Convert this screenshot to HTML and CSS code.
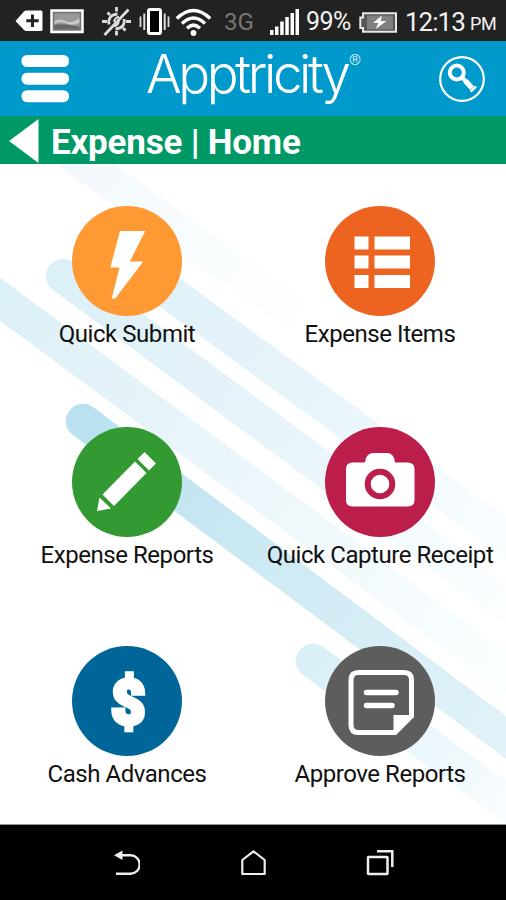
FILE: index.html
```html
<!DOCTYPE html>
<html lang="en">
<head>
    <meta charset="UTF-8">
    <meta name="viewport" content="width=device-width, initial-scale=1.0">
    <title>Expense | Home</title>
    <link rel="stylesheet" href="styles.css">
</head>
<body>
    <div class="status-bar">
        <svg class="status-icons" width="258" height="40" viewBox="0 0 258 40">
            <!-- battery saver tag -->
            <path d="M15.5 20 L24 10.5 Q25 9.5 26.500 9.500 H41 Q42.500 9.500 42.500 11 V28.500 Q42.500 30 41 30 H26.500 Q25 30 24 29 Z" fill="#fff"/>
            <path d="M32.500 13.500 V26 M26.300 19.700 H38.700" stroke="#222" stroke-width="3"/>
            <!-- picture -->
            <rect x="51.500" y="9.500" width="31" height="21.500" fill="#777" stroke="#fff" stroke-width="2.500"/>
            <rect x="54.500" y="12.500" width="25" height="15.500" fill="#999"/>
            <path d="M54.500 20 Q60 17 66 20 T79.500 17 V22 Q72 25 66 22.500 T54.500 23 Z" fill="#c8c8c8"/>
            <path d="M54.500 24 Q64 22 79.500 26 V28 H54.500 Z" fill="#666"/>
            <!-- gps off -->
            <g stroke="#ddd" fill="none" stroke-width="2.800">
                <path d="M116.500 6 V10.500 M116.500 30 V34.500 M102 20.500 H107 M126 20.500 H131 M107.500 11.500 L110 14 M123 27 L125.500 29.500"/>
                <path d="M109 23.500 Q107.500 14 117.500 13 M124 18 Q125.500 27 115.500 28"/>
                <path d="M114 21 Q115 16 119 16 M119 20 Q118 25 114 25" stroke-width="2"/>
                <path d="M104.500 34 L128.500 8.500"/>
            </g>
            <!-- vibrate -->
            <rect x="148.500" y="8.500" width="12" height="24" rx="1.500" fill="#000" stroke="#fff" stroke-width="3"/>
            <path d="M144.300 12.500 V29 M164.700 12.500 V29" stroke="#ddd" stroke-width="2"/>
            <path d="M140.500 15.500 V26 M168.500 15.500 V26" stroke="#ddd" stroke-width="1.800"/>
            <!-- wifi -->
            <g stroke="#fff" fill="none" stroke-width="3.400">
                <path d="M176.800 17.500 Q193.500 1.500 210.200 17.500"/>
                <path d="M182 22.500 Q193.500 11.500 205 22.500"/>
                <path d="M187 27.300 Q193.500 21 200 27.300"/>
            </g>
            <circle cx="193.500" cy="32" r="2.900" fill="#fff"/>
            <text x="224" y="29" class="network" textLength="30" lengthAdjust="spacingAndGlyphs">3G</text>
        </svg>
        <svg class="signal" width="32" height="40" viewBox="0 0 32 40" fill="#fff">
            <rect x="1" y="29" width="3.500" height="5"/>
            <rect x="6" y="25.500" width="3.500" height="8.500"/>
            <rect x="11.200" y="20.500" width="3.500" height="13.500"/>
            <rect x="16.300" y="16" width="3.500" height="18"/>
            <rect x="21.500" y="12" width="3.500" height="22"/>
            <rect x="26.500" y="8" width="3.500" height="26"/>
        </svg>
        <span class="percent">99%</span>
        <svg class="battery" width="40" height="40" viewBox="0 0 40 40">
            <path d="M5 12.200 H38 V30.800 H5 V27 H2.300 V16.500 H5 Z" fill="#555" stroke="#e8e8e8" stroke-width="2"/>
            <rect x="9" y="14.500" width="26" height="14" fill="#808080"/>
            <path d="M24 14.500 L15 22 H20.500 L17.500 28 L28.500 20 H22.500 Z" fill="#fff"/>
        </svg>
        <span class="clock">12:13</span>
        <span class="meridiem">PM</span>
    </div>

    <div class="header">
        <svg class="menu" width="48" height="48" viewBox="0 0 48 48" fill="#fff">
            <rect x="0.500" y="0" width="47.500" height="12" rx="5.500"/>
            <rect x="0.500" y="17.700" width="47.500" height="12" rx="5.500"/>
            <rect x="0.500" y="35.200" width="47.500" height="12" rx="5.500"/>
        </svg>
        <div class="brand">
            <span class="brand-name">Apptricity</span>
            <span class="brand-mark">®</span>
        </div>
        <svg class="search" width="48" height="48" viewBox="0 0 48 48">
            <circle cx="24" cy="24" r="21.800" fill="none" stroke="#fff" stroke-width="2.200"/>
            <circle cx="18.800" cy="17.500" r="7" fill="none" stroke="#fff" stroke-width="4"/>
            <path d="M24 22.500 L28.500 27" stroke="#fff" stroke-width="4"/>
            <path d="M27.500 26 L34 33" stroke="#fff" stroke-width="5.500"/>
            <path d="M32.500 36.500 L38 31.500" stroke="#fff" stroke-width="2.500"/>
        </svg>
    </div>

    <div class="title-bar">
        <svg width="30" height="48" viewBox="0 0 30 48"><path d="M0 25 L29.500 3 V47 Z" fill="#fff"/></svg>
        <h1>Expense | Home</h1>
    </div>

    <div class="content">
        <svg class="stripes" width="506" height="661" viewBox="0 164 506 661" fill="none" stroke-width="34.500" stroke-linecap="round">
            <defs>
                <linearGradient id="pale" gradientUnits="userSpaceOnUse" x1="80" y1="150" x2="320" y2="330">
                    <stop offset="0" stop-color="#f2f9fc"/>
                    <stop offset="1" stop-color="#ffffff"/>
                </linearGradient>
                <linearGradient id="soft" gradientUnits="userSpaceOnUse" x1="60" y1="275" x2="540" y2="620">
                    <stop offset="0" stop-color="#dcf0f7"/>
                    <stop offset="0.500" stop-color="#e8f5fa"/>
                    <stop offset="0.800" stop-color="#f7fcfe"/>
                    <stop offset="1" stop-color="#fdfeff"/>
                </linearGradient>
                <linearGradient id="lower" gradientUnits="userSpaceOnUse" x1="0" y1="299" x2="506" y2="670">
                    <stop offset="0" stop-color="#dcf0f7"/>
                    <stop offset="0.450" stop-color="#ebf6fa"/>
                    <stop offset="1" stop-color="#fbfeff"/>
                </linearGradient>
                <linearGradient id="deep" gradientUnits="userSpaceOnUse" x1="83" y1="422" x2="506" y2="736">
                    <stop offset="0" stop-color="#b9e1ef"/>
                    <stop offset="0.500" stop-color="#d0ebf4"/>
                    <stop offset="1" stop-color="#e2f2f9"/>
                </linearGradient>
                <linearGradient id="last" gradientUnits="userSpaceOnUse" x1="313" y1="661" x2="506" y2="803">
                    <stop offset="0" stop-color="#daeff7"/>
                    <stop offset="1" stop-color="#f8fcfe"/>
                </linearGradient>
            </defs>
            <path d="M75 157 L320 332" stroke="url(#pale)"/>
            <path d="M150 278 L540 563" stroke="url(#soft)"/>
            <path d="M63 276 L540 629" stroke="url(#soft)"/>
            <path d="M-30 277 L540 699" stroke="url(#lower)"/>
            <path d="M83 421 L540 763" stroke="url(#deep)"/>
            <path d="M313 661 L540 827" stroke="url(#last)"/>
        </svg>

        <div class="tiles">
            <div class="tile">
                <svg width="110" height="110" viewBox="0 0 110 110">
                    <circle cx="55" cy="55" r="55" fill="#ff9933"/>
                    <path d="M48 25 H73.300 L57.800 55.500 H71.300 L43.200 92.500 H39.700 L47.500 61.500 H38.300 Z" fill="#fff"/>
                </svg>
                <span>Quick Submit</span>
            </div>
            <div class="tile">
                <svg width="110" height="110" viewBox="0 0 110 110">
                    <circle cx="55" cy="55" r="55" fill="#ec6420"/>
                    <g fill="#fff">
                        <rect x="29.500" y="30.500" width="14" height="13"/>
                        <rect x="49.500" y="30.500" width="35.500" height="13"/>
                        <rect x="29.500" y="49.500" width="14" height="13"/>
                        <rect x="49.500" y="49.500" width="35.500" height="13"/>
                        <rect x="29.500" y="69" width="14" height="13"/>
                        <rect x="49.500" y="69" width="35.500" height="13"/>
                    </g>
                </svg>
                <span>Expense Items</span>
            </div>
            <div class="tile">
                <svg width="110" height="110" viewBox="0 0 110 110">
                    <circle cx="55" cy="55" r="55" fill="#339933"/>
                    <g fill="#fff">
                        <path d="M72.500 25 L84 36.500 L77 43.500 L65.500 32 Z"/>
                        <path d="M63 34.500 L74.500 46 L42 79 L30.500 67.500 Z"/>
                        <path d="M27.500 70.500 L39 81.500 L25 84 Z"/>
                    </g>
                </svg>
                <span>Expense Reports</span>
            </div>
            <div class="tile">
                <svg width="110" height="110" viewBox="0 0 110 110">
                    <circle cx="55" cy="55" r="55" fill="#bb1e4b"/>
                    <path d="M27.500 35.500 H40 Q40.500 26 49 26 H61.500 Q69.500 26 70 35.500 H82.500 Q89.500 35.500 89.500 42 V73 Q89.500 79.500 82.500 79.500 H27.500 Q21 79.500 21 73 V42 Q21 35.500 27.500 35.500 Z" fill="#fff"/>
                    <circle cx="55" cy="57" r="12.300" fill="#fff" stroke="#bb1e4b" stroke-width="6"/>
                </svg>
                <span>Quick Capture Receipt</span>
            </div>
            <div class="tile">
                <svg width="110" height="110" viewBox="0 0 110 110">
                    <circle cx="55" cy="55" r="55" fill="#006699"/>
                    <text class="dollar" x="39" y="78" textLength="34" lengthAdjust="spacingAndGlyphs">$</text>
                </svg>
                <span>Cash Advances</span>
            </div>
            <div class="tile">
                <svg width="110" height="110" viewBox="0 0 110 110">
                    <circle cx="55" cy="55" r="55" fill="#5d5d5d"/>
                    <path d="M33.500 26.500 H79 Q86.500 26.500 86.500 34 V70 L70 86.500 H33.500 Q26 86.500 26 79 V34 Q26 26.500 33.500 26.500 Z" fill="none" stroke="#fff" stroke-width="5"/>
                    <path d="M68.500 88 V69 H88 Z" fill="#fff"/>
                    <path d="M41.500 46.500 H71 M41.500 59.500 H67" stroke="#fff" stroke-width="5.500" stroke-linecap="round"/>
                </svg>
                <span>Approve Reports</span>
            </div>
        </div>
    </div>

    <div class="nav-bar">
        <svg width="28" height="28" viewBox="0 0 28 28">
            <path d="M8 7.300 H18.500 A9.200 9.200 0 0 1 18.500 25.700 H4" fill="none" stroke="#eee" stroke-width="2.400"/>
            <path d="M2 7.300 L10.500 2.500 V12 Z" fill="#eee"/>
        </svg>
        <svg width="28" height="28" viewBox="0 0 28 28">
            <path d="M14.500 3.300 L25.700 12 V26 H3.300 V12 Z" fill="none" stroke="#eee" stroke-width="2.200" stroke-linejoin="round"/>
        </svg>
        <svg width="28" height="28" viewBox="0 0 28 28" fill="none" stroke="#eee" stroke-width="2.500">
            <rect x="2" y="9" width="19.500" height="17" rx="0.500"/>
            <path d="M11 3.300 H26.300 V19"/>
        </svg>
    </div>
</body>
</html>
```
FILE: styles.css
```css
body {
    margin: 0;
    width: 506px;
    height: 900px;
    overflow: hidden;
    font-family: Roboto, "Liberation Sans", sans-serif;
    background-color: #fff;
}

svg {
    display: block;
    flex-shrink: 0;
}

.status-bar {
    display: flex;
    align-items: center;
    height: 41px;
    background-color: #222;
    color: #f2f2f2;
    line-height: 40px;
    white-space: nowrap;
}

.network {
    font-size: 24px;
    fill: #777;
}

.signal {
    margin-left: 11px;
}

.percent {
    width: 46px;
    margin-left: 5px;
    padding-top: 2px;
    font-size: 25px;
    letter-spacing: -0.6px;
}

.battery {
    margin-left: 6px;
}

.clock {
    width: 60px;
    margin-left: 7px;
    padding-top: 2px;
    font-size: 26px;
    letter-spacing: -1px;
}

.meridiem {
    margin-left: 5px;
    padding-top: 6px;
    font-size: 18px;
    letter-spacing: -0.4px;
}

.header {
    display: flex;
    align-items: center;
    height: 75px;
    background-color: #0099cc;
}

.menu {
    margin-left: 21px;
}

.brand {
    display: flex;
    width: 220px;
    height: 75px;
    margin-left: 77px;
    color: #fff;
    white-space: nowrap;
}

.brand-name {
    width: 203px;
    font-family: Inter, "Liberation Sans", sans-serif;
    font-size: 53px;
    font-weight: 300;
    letter-spacing: -3.4px;
    line-height: 66px;
}

.brand-mark {
    padding-top: 10px;
    font-size: 15px;
    font-weight: 300;
    line-height: 18px;
}

.search {
    margin-left: 72px;
}

.title-bar {
    display: flex;
    align-items: center;
    height: 48px;
    padding-left: 9px;
    background-color: #009966;
}

.title-bar h1 {
    margin: 5px 0 0 12px;
    font-size: 35px;
    font-weight: bold;
    letter-spacing: -0.2px;
    color: #fff;
    line-height: 44px;
    white-space: nowrap;
}

.content {
    position: relative;
    height: 660px;
    overflow: hidden;
    border-bottom: 1px solid #999;
}

.stripes {
    position: absolute;
    top: 0;
    left: 0;
}

.tiles {
    position: relative;
    display: grid;
    grid-template-columns: 253px 253px;
    grid-template-rows: 221px 219px 178px;
    padding-top: 42px;
}

.tile {
    display: flex;
    flex-direction: column;
    align-items: center;
    gap: 4px;
    font-size: 24px;
    letter-spacing: -0.45px;
    line-height: 28px;
    color: #111;
    white-space: nowrap;
}

.tile span {
    padding-left: 1px;
}

.dollar {
    font-size: 62px;
    font-weight: 900;
    fill: #fff;
    stroke: #fff;
    stroke-width: 4.5px;
}

.nav-bar {
    display: flex;
    justify-content: center;
    align-items: center;
    gap: 99px;
    height: 73px;
    padding-bottom: 2px;
    background-color: #000;
}
```
